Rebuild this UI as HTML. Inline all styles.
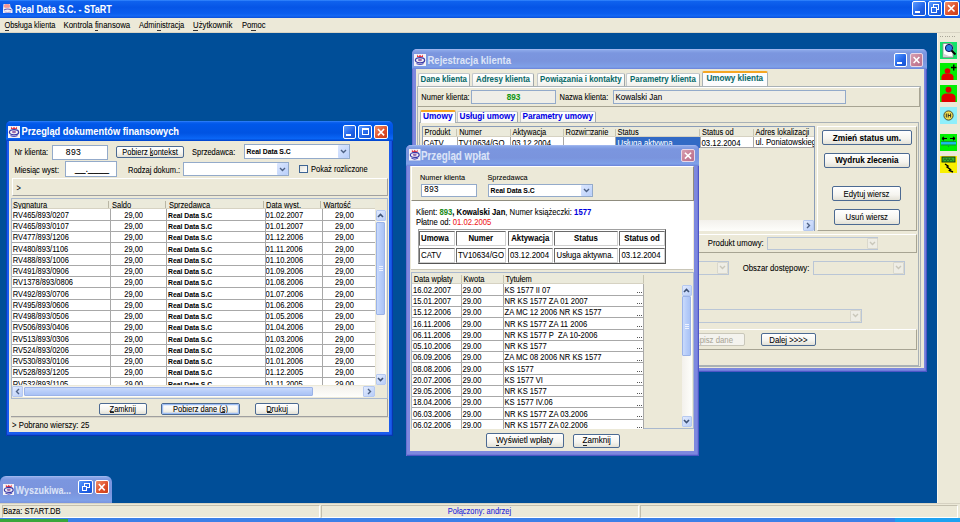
<!DOCTYPE html><html><head><meta charset="utf-8"><style>*{box-sizing:border-box;margin:0;padding:0}
html,body{width:960px;height:522px;overflow:hidden;background:#004E98;font-family:"Liberation Sans",sans-serif;font-size:7.5px;color:#000}
.a{position:absolute}
.t{position:absolute;white-space:nowrap;line-height:1;-webkit-text-stroke:0.06px currentColor;transform:scaleY(1.1)}
.face{background:#ECE9D8}
.atb{background:linear-gradient(#3D8DFF 0,#1064F0 1px,#0058EA 3px,#0053E2 60%,#0A66F6 88%,#0040C8 100%)}
.itb{background:linear-gradient(#A9BDF1 0,#8AA6E8 1.5px,#7B96DF 4px,#7A94DD 60%,#7FA0E8 90%,#6A82D8 100%)}
.xbtn{position:absolute;border:1px solid #fff;border-radius:2px;background:linear-gradient(135deg,#5A9BFF,#1F61E6 60%,#1B55D0)}
.xcl{position:absolute;border:1px solid #fff;border-radius:2px;background:linear-gradient(135deg,#F0906A,#E0522C 55%,#C83C18)}
.xcli{position:absolute;border:1px solid #E8D8E8;border-radius:2px;background:linear-gradient(135deg,#D8A0B0,#C47C94 60%,#B87090)}
.btn{position:absolute;border:1px solid #4C6A92;border-radius:2px;background:linear-gradient(#FFFFFF,#F5F4EF 60%,#E3E1D6)}
</style></head><body>
<div class="a" style="left:0px;top:0px;width:960.00px;height:18.00px;background:linear-gradient(#3A8CFF 0,#0F62EE 1.5px,#0655E6 40%,#0A5DEE 75%,#1468F4 88%,#0A4ED8 100%)"></div>
<svg class="a" style="left:1.5px;top:3px" width="11" height="11" viewBox="0 0 11 11"><path d="M1.5 1 H8 L8.5 4 L10.5 6.5 V10 H1 V6 Z" fill="#F4F0F4"/><path d="M2.5 1.5 H7.5 V4.5 H2.5Z" fill="#F05050"/><path d="M4 2 V4.2 M6 2 V4.2" stroke="#fff" stroke-width="0.8"/><path d="M2 7 Q5.5 5 9.5 7" stroke="#6A5AB8" stroke-width="1.1" fill="none"/><path d="M2.5 9 Q5.5 10 9 9" stroke="#9A8AD0" stroke-width="0.8" fill="none"/></svg>
<div class="t" style="left:15px;top:4.79px;font-size:9px;color:#fff;font-weight:bold;transform:scaleY(1.22)">Real Data S.C. - STaRT</div>
<div class="xbtn" style="left:911.7px;top:1px;width:13.90px;height:14.60px"></div>
<div class="a" style="left:915.2px;top:10.6px;width:4.50px;height:2.00px;background:#fff"></div>
<div class="xbtn" style="left:927.7px;top:1px;width:14.60px;height:14.60px"></div>
<div class="a" style="left:933.2px;top:4px;width:6.10px;height:5.60px;border:1px solid #fff;border-top-width:1.5px"></div>
<div class="a" style="left:931.2px;top:6.5px;width:5.60px;height:6.10px;border:1px solid #fff;border-top-width:1.5px;background:#2A6AEA"></div>
<div class="xcl" style="left:944.4px;top:1px;width:14.60px;height:14.60px"></div>
<svg class="a" style="left:944.4px;top:1px" width="14.600000000000023" height="14.6"><path d="M4.088000000000007 4.088 L10.512000000000016 10.511999999999999 M10.512000000000016 4.088 L4.088000000000007 10.511999999999999" stroke="#fff" stroke-width="1.6"/></svg>
<div class="a" style="left:0px;top:18px;width:960.00px;height:13.50px;background:#ECE9D8"></div>
<div class="a" style="left:0px;top:31.5px;width:960.00px;height:1.50px;background:#D8D4C4"></div>
<div class="t" style="left:4.5px;top:21.97px;font-size:7.4px">Obsługa klienta</div>
<div class="t" style="left:63.5px;top:21.75px;font-size:7.85px">Kontrola finansowa</div>
<div class="t" style="left:139px;top:21.90px;font-size:7.55px">Administracja</div>
<div class="t" style="left:193px;top:21.78px;font-size:7.8px">Użytkownik</div>
<div class="t" style="left:242px;top:21.88px;font-size:7.6px">Pomoc</div>
<div class="a" style="left:4.5px;top:29.6px;width:4.50px;height:0.80px;background:#333"></div>
<div class="a" style="left:95px;top:29.6px;width:2.50px;height:0.80px;background:#333"></div>
<div class="a" style="left:157px;top:29.6px;width:3.50px;height:0.80px;background:#333"></div>
<div class="a" style="left:193px;top:29.6px;width:5.00px;height:0.80px;background:#333"></div>
<div class="a" style="left:251px;top:29.6px;width:4.50px;height:0.80px;background:#333"></div>
<div class="a" style="left:937px;top:33px;width:23.00px;height:470.00px;background:#ECE9D8"></div>
<div class="a" style="left:940.0px;top:35.5px;width:1.00px;height:1.00px;background:#A8A597"></div>
<div class="a" style="left:942.3px;top:35.5px;width:1.00px;height:1.00px;background:#A8A597"></div>
<div class="a" style="left:944.6px;top:35.5px;width:1.00px;height:1.00px;background:#A8A597"></div>
<div class="a" style="left:946.9px;top:35.5px;width:1.00px;height:1.00px;background:#A8A597"></div>
<div class="a" style="left:949.2px;top:35.5px;width:1.00px;height:1.00px;background:#A8A597"></div>
<div class="a" style="left:951.5px;top:35.5px;width:1.00px;height:1.00px;background:#A8A597"></div>
<div class="a" style="left:953.8px;top:35.5px;width:1.00px;height:1.00px;background:#A8A597"></div>
<div class="a" style="left:0px;top:503px;width:960.00px;height:15.00px;background:#ECE9D8"></div>
<div class="a" style="left:0px;top:503px;width:960.00px;height:1.00px;background:#D6D2C2"></div>
<div class="a" style="left:2px;top:505px;width:317.50px;height:12.50px;border-top:1px solid #C3BFAE;border-left:1px solid #C3BFAE;border-bottom:1px solid #fff;border-right:1px solid #fff"></div>
<div class="a" style="left:320.5px;top:505px;width:318.00px;height:12.50px;border-top:1px solid #C3BFAE;border-left:1px solid #C3BFAE;border-bottom:1px solid #fff;border-right:1px solid #fff"></div>
<div class="a" style="left:639.5px;top:505px;width:318.00px;height:12.50px;border-top:1px solid #C3BFAE;border-left:1px solid #C3BFAE;border-bottom:1px solid #fff;border-right:1px solid #fff"></div>
<div class="t" style="left:3px;top:508.08px;font-size:7.6px">Baza: START.DB</div>
<div class="t" style="left:320.5px;width:318.0px;text-align:center;top:508.12px;color:#1F1FD8">Połączony: andrzej</div>
<div class="a" style="left:0px;top:518px;width:960.00px;height:4.00px;background:#3C80E8"></div>
<div class="a" style="left:0px;top:519px;width:67.50px;height:3.00px;background:#3AA63A"></div>
<div class="a" style="left:895px;top:518px;width:65.00px;height:4.00px;background:#1EA2F0"></div>
<div class="a" style="left:6px;top:120.5px;width:386.50px;height:315.30px;background:#1A5CEE;border-radius:5px 5px 0 0;box-shadow:inset 1px 0 0 #0A3CC0,inset -1.2px 0 0 #0836B0,inset 0 -1.2px 0 #0836B0"></div>
<div class="a" style="left:6px;top:120.5px;width:386.50px;height:20.50px;border-radius:5px 5px 0 0;background:linear-gradient(#3D8DFF 0,#1064F0 1px,#0058EA 3px,#0053E2 60%,#0A66F6 88%,#0040C8 100%)"></div>
<svg class="a" style="left:8px;top:126px" width="12" height="12" viewBox="0 0 12 12"><rect width="12" height="12" fill="#F4F2F6"/><path d="M3 0.5 L4.5 2.5 L6 0.8 L7.5 2.5 L9 0.5 L9 3 L3 3Z" fill="#E8303A"/><ellipse cx="6" cy="6.2" rx="4.6" ry="2.6" fill="none" stroke="#3A3AA8" stroke-width="1.3"/><ellipse cx="6" cy="6" rx="2" ry="1.3" fill="#9A6AB0"/><path d="M2.5 9.5 Q6 11.5 9.5 9.5" stroke="#5050B8" stroke-width="1.2" fill="none"/></svg>
<div class="t" style="left:21.5px;top:127.04px;font-size:9.3px;color:#fff;font-weight:bold;transform:scaleY(1.22)">Przegląd dokumentów finansowych</div>
<div class="xbtn" style="left:342.5px;top:124.6px;width:13.90px;height:14.40px"></div>
<div class="a" style="left:346.0px;top:134px;width:4.50px;height:2.00px;background:#fff"></div>
<div class="xbtn" style="left:358.4px;top:124.6px;width:14.10px;height:14.40px"></div>
<div class="a" style="left:361.9px;top:128.1px;width:7.10px;height:7.40px;border:1px solid #fff;border-top-width:2px"></div>
<div class="xcl" style="left:374.4px;top:124.6px;width:14.00px;height:14.40px"></div>
<svg class="a" style="left:374.4px;top:124.6px" width="14.0" height="14.400000000000006"><path d="M3.9200000000000004 4.032000000000002 L10.08 10.368000000000004 M10.08 4.032000000000002 L3.9200000000000004 10.368000000000004" stroke="#fff" stroke-width="1.6"/></svg>
<div class="a" style="left:9.2px;top:141px;width:379.50px;height:291.00px;background:#ECE9D8"></div>
<div class="t" style="left:14.4px;top:149.32px">Nr klienta:</div>
<div class="a" style="left:52px;top:145px;width:56.00px;height:15.00px;background:#fff;border:1px solid #93AACA"></div>
<div class="t" style="left:65.8px;top:148.09px;font-size:8.6px;letter-spacing:0.3px">893</div>
<div class="btn" style="left:116px;top:146px;width:68.00px;height:12.00px"></div>
<div class="t" style="left:116px;width:68px;text-align:center;top:149.12px">Pobierz kontekst</div>
<div class="t" style="left:192px;top:149.12px">Sprzedawca:</div>
<div class="a" style="left:244px;top:144.4px;width:105.60px;height:14.20px;background:#fff;border:1px solid #93AACA"></div>
<div class="a" style="left:337.6px;top:145.4px;width:11.00px;height:12.20px;border-radius:1px;background:linear-gradient(135deg,#DCE7FE,#B9CFFA)"></div>
<svg class="a" style="left:339.6px;top:149.0px" width="7" height="5"><path d="M1 1 L3.5 3.5 L6 1" stroke="#4D6185" stroke-width="1.4" fill="none"/></svg>
<div class="t" style="left:246.5px;top:149.47px;font-size:6.8px;font-weight:bold">Real Data S.C</div>
<div class="t" style="left:14.4px;top:166.52px">Miesiąc wyst:</div>
<div class="a" style="left:65px;top:161px;width:52.00px;height:15.50px;background:#fff;border:1px solid #93AACA"></div>
<div class="t" style="left:75px;top:164.19px;font-size:9.4px">__.____</div>
<div class="t" style="left:128px;top:166.52px">Rodzaj dokum.:</div>
<div class="a" style="left:183.3px;top:162px;width:105.50px;height:14.00px;background:#fff;border:1px solid #93AACA"></div>
<div class="a" style="left:276.8px;top:163px;width:11.00px;height:12.00px;border-radius:1px;background:linear-gradient(135deg,#DCE7FE,#B9CFFA)"></div>
<svg class="a" style="left:278.8px;top:166.5px" width="7" height="5"><path d="M1 1 L3.5 3.5 L6 1" stroke="#4D6185" stroke-width="1.4" fill="none"/></svg>
<div class="a" style="left:299.3px;top:164.7px;width:8.70px;height:8.80px;background:linear-gradient(135deg,#E4E3DC,#FFFFFF);border:1px solid #3E6594"></div>
<div class="t" style="left:311px;top:166.12px">Pokaż rozliczone</div>
<div class="a" style="left:11.5px;top:178px;width:376.00px;height:17.50px;border-top:1px solid #fff;border-left:1px solid #fff;border-right:1px solid #A0A0A0;border-bottom:1px solid #A0A0A0"></div>
<div class="t" style="left:16.4px;top:184.92px">&gt;</div>
<div class="a" style="left:11px;top:198px;width:376.50px;height:200.70px;border:1px solid #A9B8CE;background:#ECE9D8"></div>
<div class="a" style="left:12px;top:200px;width:363.00px;height:9.20px;background:#EBEADB;border-bottom:1px solid #D6D2C2"></div>
<div class="a" style="left:107.5px;top:201px;width:1.00px;height:7.00px;background:#B9B6A4"></div>
<div class="a" style="left:165px;top:201px;width:1.00px;height:7.00px;background:#B9B6A4"></div>
<div class="a" style="left:263px;top:201px;width:1.00px;height:7.00px;background:#B9B6A4"></div>
<div class="a" style="left:320px;top:201px;width:1.00px;height:7.00px;background:#B9B6A4"></div>
<div class="t" style="left:13px;top:201.62px">Sygnatura</div>
<div class="t" style="left:112px;top:201.62px">Saldo</div>
<div class="t" style="left:168.9px;top:201.62px">Sprzedawca</div>
<div class="t" style="left:266px;top:201.62px">Data wyst.</div>
<div class="t" style="left:323.5px;top:201.62px">Wartość</div>
<div class="a" style="left:12px;top:209.2px;width:363px;height:176.1px;overflow:hidden;background:#fff">
<div class="a" style="left:0px;top:10.75px;width:363.00px;height:0.75px;background:#A8A8A8"></div>
<div class="t" style="left:0.7px;top:2.62px">RV465/893/0207</div>
<div class="t" style="right:232px;top:2.62px">29,00</div>
<div class="t" style="left:156px;top:3.57px;font-size:6.8px;font-weight:bold">Real Data S.C</div>
<div class="t" style="left:253.6px;top:2.62px">01.02.2007</div>
<div class="t" style="right:21.200000000000045px;top:2.62px">29,00</div>
<div class="a" style="left:0px;top:22.0px;width:363.00px;height:0.75px;background:#A8A8A8"></div>
<div class="t" style="left:0.7px;top:13.88px">RV465/893/0107</div>
<div class="t" style="right:232px;top:13.88px">29,00</div>
<div class="t" style="left:156px;top:14.82px;font-size:6.8px;font-weight:bold">Real Data S.C</div>
<div class="t" style="left:253.6px;top:13.88px">01.01.2007</div>
<div class="t" style="right:21.200000000000045px;top:13.88px">29,00</div>
<div class="a" style="left:0px;top:33.25px;width:363.00px;height:0.75px;background:#A8A8A8"></div>
<div class="t" style="left:0.7px;top:25.12px">RV477/893/1206</div>
<div class="t" style="right:232px;top:25.12px">29,00</div>
<div class="t" style="left:156px;top:26.07px;font-size:6.8px;font-weight:bold">Real Data S.C</div>
<div class="t" style="left:253.6px;top:25.12px">01.12.2006</div>
<div class="t" style="right:21.200000000000045px;top:25.12px">29,00</div>
<div class="a" style="left:0px;top:44.5px;width:363.00px;height:0.75px;background:#A8A8A8"></div>
<div class="t" style="left:0.7px;top:36.38px">RV480/893/1106</div>
<div class="t" style="right:232px;top:36.38px">29,00</div>
<div class="t" style="left:156px;top:37.32px;font-size:6.8px;font-weight:bold">Real Data S.C</div>
<div class="t" style="left:253.6px;top:36.38px">01.11.2006</div>
<div class="t" style="right:21.200000000000045px;top:36.38px">29,00</div>
<div class="a" style="left:0px;top:55.75px;width:363.00px;height:0.75px;background:#A8A8A8"></div>
<div class="t" style="left:0.7px;top:47.62px">RV488/893/1006</div>
<div class="t" style="right:232px;top:47.62px">29,00</div>
<div class="t" style="left:156px;top:48.57px;font-size:6.8px;font-weight:bold">Real Data S.C</div>
<div class="t" style="left:253.6px;top:47.62px">01.10.2006</div>
<div class="t" style="right:21.200000000000045px;top:47.62px">29,00</div>
<div class="a" style="left:0px;top:67.0px;width:363.00px;height:0.75px;background:#A8A8A8"></div>
<div class="t" style="left:0.7px;top:58.88px">RV491/893/0906</div>
<div class="t" style="right:232px;top:58.88px">29,00</div>
<div class="t" style="left:156px;top:59.82px;font-size:6.8px;font-weight:bold">Real Data S.C</div>
<div class="t" style="left:253.6px;top:58.88px">01.09.2006</div>
<div class="t" style="right:21.200000000000045px;top:58.88px">29,00</div>
<div class="a" style="left:0px;top:78.25px;width:363.00px;height:0.75px;background:#A8A8A8"></div>
<div class="t" style="left:0.7px;top:70.12px">RV1378/893/0806</div>
<div class="t" style="right:232px;top:70.12px">29,00</div>
<div class="t" style="left:156px;top:71.07px;font-size:6.8px;font-weight:bold">Real Data S.C</div>
<div class="t" style="left:253.6px;top:70.12px">01.08.2006</div>
<div class="t" style="right:21.200000000000045px;top:70.12px">29,00</div>
<div class="a" style="left:0px;top:89.5px;width:363.00px;height:0.75px;background:#A8A8A8"></div>
<div class="t" style="left:0.7px;top:81.38px">RV492/893/0706</div>
<div class="t" style="right:232px;top:81.38px">29,00</div>
<div class="t" style="left:156px;top:82.32px;font-size:6.8px;font-weight:bold">Real Data S.C</div>
<div class="t" style="left:253.6px;top:81.38px">01.07.2006</div>
<div class="t" style="right:21.200000000000045px;top:81.38px">29,00</div>
<div class="a" style="left:0px;top:100.75px;width:363.00px;height:0.75px;background:#A8A8A8"></div>
<div class="t" style="left:0.7px;top:92.62px">RV495/893/0606</div>
<div class="t" style="right:232px;top:92.62px">29,00</div>
<div class="t" style="left:156px;top:93.57px;font-size:6.8px;font-weight:bold">Real Data S.C</div>
<div class="t" style="left:253.6px;top:92.62px">01.06.2006</div>
<div class="t" style="right:21.200000000000045px;top:92.62px">29,00</div>
<div class="a" style="left:0px;top:112.0px;width:363.00px;height:0.75px;background:#A8A8A8"></div>
<div class="t" style="left:0.7px;top:103.88px">RV498/893/0506</div>
<div class="t" style="right:232px;top:103.88px">29,00</div>
<div class="t" style="left:156px;top:104.82px;font-size:6.8px;font-weight:bold">Real Data S.C</div>
<div class="t" style="left:253.6px;top:103.88px">01.05.2006</div>
<div class="t" style="right:21.200000000000045px;top:103.88px">29,00</div>
<div class="a" style="left:0px;top:123.25px;width:363.00px;height:0.75px;background:#A8A8A8"></div>
<div class="t" style="left:0.7px;top:115.12px">RV506/893/0406</div>
<div class="t" style="right:232px;top:115.12px">29,00</div>
<div class="t" style="left:156px;top:116.07px;font-size:6.8px;font-weight:bold">Real Data S.C</div>
<div class="t" style="left:253.6px;top:115.12px">01.04.2006</div>
<div class="t" style="right:21.200000000000045px;top:115.12px">29,00</div>
<div class="a" style="left:0px;top:134.5px;width:363.00px;height:0.75px;background:#A8A8A8"></div>
<div class="t" style="left:0.7px;top:126.38px">RV513/893/0306</div>
<div class="t" style="right:232px;top:126.38px">29,00</div>
<div class="t" style="left:156px;top:127.32px;font-size:6.8px;font-weight:bold">Real Data S.C</div>
<div class="t" style="left:253.6px;top:126.38px">01.03.2006</div>
<div class="t" style="right:21.200000000000045px;top:126.38px">29,00</div>
<div class="a" style="left:0px;top:145.75px;width:363.00px;height:0.75px;background:#A8A8A8"></div>
<div class="t" style="left:0.7px;top:137.62px">RV524/893/0206</div>
<div class="t" style="right:232px;top:137.62px">29,00</div>
<div class="t" style="left:156px;top:138.57px;font-size:6.8px;font-weight:bold">Real Data S.C</div>
<div class="t" style="left:253.6px;top:137.62px">01.02.2006</div>
<div class="t" style="right:21.200000000000045px;top:137.62px">29,00</div>
<div class="a" style="left:0px;top:157.0px;width:363.00px;height:0.75px;background:#A8A8A8"></div>
<div class="t" style="left:0.7px;top:148.88px">RV530/893/0106</div>
<div class="t" style="right:232px;top:148.88px">29,00</div>
<div class="t" style="left:156px;top:149.82px;font-size:6.8px;font-weight:bold">Real Data S.C</div>
<div class="t" style="left:253.6px;top:148.88px">01.01.2006</div>
<div class="t" style="right:21.200000000000045px;top:148.88px">29,00</div>
<div class="a" style="left:0px;top:168.25px;width:363.00px;height:0.75px;background:#A8A8A8"></div>
<div class="t" style="left:0.7px;top:160.12px">RV528/893/1205</div>
<div class="t" style="right:232px;top:160.12px">29,00</div>
<div class="t" style="left:156px;top:161.07px;font-size:6.8px;font-weight:bold">Real Data S.C</div>
<div class="t" style="left:253.6px;top:160.12px">01.12.2005</div>
<div class="t" style="right:21.200000000000045px;top:160.12px">29,00</div>
<div class="a" style="left:0px;top:179.5px;width:363.00px;height:0.75px;background:#A8A8A8"></div>
<div class="t" style="left:0.7px;top:171.38px">RV532/893/1105</div>
<div class="t" style="right:232px;top:171.38px">29,00</div>
<div class="t" style="left:156px;top:172.32px;font-size:6.8px;font-weight:bold">Real Data S.C</div>
<div class="t" style="left:253.6px;top:171.38px">01.11.2005</div>
<div class="t" style="right:21.200000000000045px;top:171.38px">29,00</div>
<div class="a" style="left:97.9px;top:0px;width:0.75px;height:176.10px;background:#A8A8A8"></div>
<div class="a" style="left:153.9px;top:0px;width:0.75px;height:176.10px;background:#A8A8A8"></div>
<div class="a" style="left:252.7px;top:0px;width:0.75px;height:176.10px;background:#A8A8A8"></div>
<div class="a" style="left:309.5px;top:0px;width:0.75px;height:176.10px;background:#A8A8A8"></div>
</div>
<div class="a" style="left:375.5px;top:209.8px;width:10.20px;height:175.50px;background:linear-gradient(90deg,#F3F1EC,#FEFEFB)"></div>
<div class="a" style="left:375.5px;top:209.8px;width:10.20px;height:11.20px;border-radius:1px;background:linear-gradient(135deg,#E2EBFE,#B8CDF8);border:0.5px solid #B6C9F0"></div>
<svg class="a" style="left:377.1px;top:212.9px" width="7" height="5"><path d="M1 4 L3.5 1.5 L6 4" stroke="#3D5175" stroke-width="1.6" fill="none"/></svg>
<div class="a" style="left:375.5px;top:374.1px;width:10.20px;height:11.20px;border-radius:1px;background:linear-gradient(135deg,#E2EBFE,#B8CDF8);border:0.5px solid #B6C9F0"></div>
<svg class="a" style="left:377.1px;top:377.20000000000005px" width="7" height="5"><path d="M1 1 L3.5 3.5 L6 1" stroke="#3D5175" stroke-width="1.6" fill="none"/></svg>
<div class="a" style="left:376.0px;top:221.5px;width:9.20px;height:93.50px;border-radius:1px;background:linear-gradient(90deg,#C9DAFC,#B7CDF9 50%,#A9C2F5);border:0.5px solid #9BB3E8"></div>
<div class="a" style="left:378.5px;top:265.75px;width:4.20px;height:1.00px;background:#EEF3FE"></div>
<div class="a" style="left:378.5px;top:267.75px;width:4.20px;height:1.00px;background:#EEF3FE"></div>
<div class="a" style="left:378.5px;top:269.75px;width:4.20px;height:1.00px;background:#EEF3FE"></div>
<div class="a" style="left:11.5px;top:386.3px;width:363.50px;height:10.70px;background:linear-gradient(#F3F1EC,#FEFEFB)"></div>
<div class="a" style="left:11.5px;top:386.3px;width:11.70px;height:10.70px;border-radius:1px;background:linear-gradient(135deg,#E2EBFE,#B8CDF8);border:0.5px solid #B6C9F0"></div>
<svg class="a" style="left:14.849999999999994px;top:388.15px" width="5" height="7"><path d="M4 1 L1.5 3.5 L4 6" stroke="#4D6185" stroke-width="1.4" fill="none"/></svg>
<div class="a" style="left:363.3px;top:386.3px;width:11.70px;height:10.70px;border-radius:1px;background:linear-gradient(135deg,#E2EBFE,#B8CDF8);border:0.5px solid #B6C9F0"></div>
<svg class="a" style="left:366.65px;top:388.15px" width="5" height="7"><path d="M1 1 L3.5 3.5 L1 6" stroke="#4D6185" stroke-width="1.4" fill="none"/></svg>
<div class="a" style="left:24.4px;top:386.8px;width:288.60px;height:9.70px;border-radius:1px;background:linear-gradient(#C9DAFC,#B7CDF9 50%,#A9C2F5);border:0.5px solid #9BB3E8"></div>
<div class="btn" style="left:98.7px;top:402.5px;width:48.00px;height:12.20px"></div>
<div class="t" style="left:98.7px;width:47.999999999999986px;text-align:center;top:405.73px">Zamknij</div>
<div class="btn" style="left:161px;top:402.5px;width:79.00px;height:12.20px"></div>
<div class="t" style="left:161px;width:79px;text-align:center;top:405.73px">Pobierz dane (s)</div>
<div class="a" style="left:162px;top:403.5px;width:77.00px;height:10.20px;border-radius:1px;box-shadow:inset 0 0 0 1.2px #9DBDF3"></div>
<div class="btn" style="left:255.3px;top:402.5px;width:43.40px;height:12.20px"></div>
<div class="t" style="left:255.3px;width:43.39999999999998px;text-align:center;top:405.73px">Drukuj</div>
<div class="a" style="left:11px;top:399px;width:376.50px;height:17.70px;border-bottom:1px solid #A0A0A0;border-right:1px solid #A0A0A0"></div>
<div class="a" style="left:11px;top:417px;width:377.70px;height:1.00px;background:#D9D5C6"></div>
<div class="t" style="left:12px;top:421.58px;font-size:7.8px">&gt; Pobrano wierszy: 25</div>
<div class="a" style="left:109.5px;top:412.2px;width:4.50px;height:0.80px;background:#222"></div>
<div class="a" style="left:221px;top:412.2px;width:3.50px;height:0.80px;background:#222"></div>
<div class="a" style="left:267px;top:412.2px;width:5.00px;height:0.80px;background:#222"></div>
<div class="a" style="left:149.6px;top:155.3px;width:3.40px;height:0.80px;background:#222"></div>
<div class="a" style="left:412px;top:49px;width:515.00px;height:323.00px;background:#7D88DF;border-radius:5px 5px 0 0;box-shadow:inset 1px 0 0 #6A70D0,inset -1.2px 0 0 #4D55C6,inset 0 -1.2px 0 #4D55C6"></div>
<div class="a" style="left:412px;top:49px;width:515.00px;height:20.00px;border-radius:5px 5px 0 0;background:linear-gradient(#A9BDF1 0,#8AA6E8 1.5px,#7B96DF 4px,#7A94DD 60%,#7FA0E8 90%,#6A82D8 100%)"></div>
<svg class="a" style="left:414px;top:54px" width="12" height="12" viewBox="0 0 12 12"><rect width="12" height="12" fill="#F4F2F6"/><path d="M3 0.5 L4.5 2.5 L6 0.8 L7.5 2.5 L9 0.5 L9 3 L3 3Z" fill="#E8303A"/><ellipse cx="6" cy="6.2" rx="4.6" ry="2.6" fill="none" stroke="#3A3AA8" stroke-width="1.3"/><ellipse cx="6" cy="6" rx="2" ry="1.3" fill="#9A6AB0"/><path d="M2.5 9.5 Q6 11.5 9.5 9.5" stroke="#5050B8" stroke-width="1.2" fill="none"/></svg>
<div class="t" style="left:427.5px;top:55.45px;font-size:9.5px;color:#DCE4F8;font-weight:bold;transform:scaleY(1.22)">Rejestracja klienta</div>
<div class="xbtn" style="left:893.5px;top:53.4px;width:13.50px;height:14.00px"></div>
<div class="a" style="left:897.0px;top:62.400000000000006px;width:4.50px;height:2.00px;background:#fff"></div>
<div class="xcli" style="left:910px;top:53.4px;width:13.00px;height:14.00px"></div>
<svg class="a" style="left:910px;top:53.4px" width="13" height="14.000000000000007"><path d="M3.6400000000000006 3.920000000000002 L9.36 10.080000000000005 M9.36 3.920000000000002 L3.6400000000000006 10.080000000000005" stroke="#fff" stroke-width="1.6"/></svg>
<div class="a" style="left:416px;top:69px;width:507.50px;height:298.50px;background:#ECE9D8"></div>
<div class="a" style="left:417.5px;top:72.5px;width:52.50px;height:13.50px;border:1px solid #C3C8CC;border-right-color:#A0A6AA;border-bottom:none;border-radius:2px 2px 0 0;background:linear-gradient(#FFFFFF,#FAFAF7 60%,#F0EFEA)"></div>
<div class="t" style="left:417.5px;width:52.5px;text-align:center;top:76.33px;font-size:7.9px;color:#0B6B6B;font-weight:bold">Dane klienta</div>
<div class="a" style="left:472px;top:72.5px;width:62.00px;height:13.50px;border:1px solid #C3C8CC;border-right-color:#A0A6AA;border-bottom:none;border-radius:2px 2px 0 0;background:linear-gradient(#FFFFFF,#FAFAF7 60%,#F0EFEA)"></div>
<div class="t" style="left:472px;width:62px;text-align:center;top:76.33px;font-size:7.9px;color:#0B6B6B;font-weight:bold">Adresy klienta</div>
<div class="a" style="left:536.7px;top:72.5px;width:88.30px;height:13.50px;border:1px solid #C3C8CC;border-right-color:#A0A6AA;border-bottom:none;border-radius:2px 2px 0 0;background:linear-gradient(#FFFFFF,#FAFAF7 60%,#F0EFEA)"></div>
<div class="t" style="left:536.7px;width:88.29999999999995px;text-align:center;top:76.33px;font-size:7.9px;color:#0B6B6B;font-weight:bold">Powiązania i kontakty</div>
<div class="a" style="left:626px;top:72.5px;width:74.00px;height:13.50px;border:1px solid #C3C8CC;border-right-color:#A0A6AA;border-bottom:none;border-radius:2px 2px 0 0;background:linear-gradient(#FFFFFF,#FAFAF7 60%,#F0EFEA)"></div>
<div class="t" style="left:626px;width:74px;text-align:center;top:76.33px;font-size:7.9px;color:#0B6B6B;font-weight:bold">Parametry klienta</div>
<div class="a" style="left:416.5px;top:85.5px;width:504.50px;height:281.50px;border:1px solid #A9B1B6;background:#F5F4EC"></div>
<div class="a" style="left:702px;top:70.5px;width:65.50px;height:15.50px;border:1px solid #A9B1B6;border-bottom:none;border-top:2px solid #F5A623;border-radius:2px 2px 0 0;background:#FCFCFE"></div>
<div class="t" style="left:702px;width:65.5px;text-align:center;top:75.33px;font-size:8.1px;color:#0B6B6B;font-weight:bold">Umowy klienta</div>
<div class="a" style="left:417.5px;top:87px;width:502.50px;height:19.50px;background:#ECE9D8;border-bottom:1.5px solid #A7A493;border-right:1.5px solid #A7A493;border-top:1px solid #fff"></div>
<div class="t" style="left:421.3px;top:94.33px">Numer klienta:</div>
<div class="a" style="left:471px;top:90px;width:85.00px;height:14.00px;background:#EFEEE8;border:1px solid #93AACA"></div>
<div class="t" style="left:471px;width:85px;text-align:center;top:93.78px;font-size:8.2px;color:#129612;font-weight:bold">893</div>
<div class="t" style="left:559.5px;top:94.33px">Nazwa klienta:</div>
<div class="a" style="left:612.5px;top:90px;width:233.00px;height:13.75px;background:#EFEEE8;border:1px solid #93AACA"></div>
<div class="t" style="left:615.5px;top:93.68px;font-size:8px">Kowalski Jan</div>
<div class="a" style="left:417.5px;top:106.5px;width:502.50px;height:259.50px;background:#ECE9D8"></div>
<div class="a" style="left:457px;top:111px;width:60.50px;height:11.50px;border:1px solid #C3C8CC;border-right-color:#A0A6AA;border-bottom:none;border-radius:2px 2px 0 0;background:linear-gradient(#FFFFFF,#FAFAF7 60%,#F0EFEA)"></div>
<div class="t" style="left:457px;width:60.5px;text-align:center;top:112.98px;font-size:8.2px;color:#0000E6;font-weight:bold">Usługi umowy</div>
<div class="a" style="left:519.5px;top:111px;width:76.50px;height:11.50px;border:1px solid #C3C8CC;border-right-color:#A0A6AA;border-bottom:none;border-radius:2px 2px 0 0;background:linear-gradient(#FFFFFF,#FAFAF7 60%,#F0EFEA)"></div>
<div class="t" style="left:519.5px;width:76.5px;text-align:center;top:112.98px;font-size:8.2px;color:#0000E6;font-weight:bold">Parametry umowy</div>
<div class="a" style="left:418.5px;top:122px;width:500.50px;height:244.00px;border:1px solid #A9B1B6;background:#F2F1EA"></div>
<div class="a" style="left:419.5px;top:109.5px;width:36.50px;height:13.00px;border:1px solid #A9B1B6;border-bottom:none;border-top:2px solid #F5A623;border-radius:2px 2px 0 0;background:#FCFCFE"></div>
<div class="t" style="left:419.5px;width:36.5px;text-align:center;top:111.93px;font-size:8.3px;color:#0000E6;font-weight:bold">Umowy</div>
<div class="a" style="left:419.5px;top:123px;width:498.50px;height:242.00px;background:#ECE9D8"></div>
<div class="a" style="left:421.5px;top:125.5px;width:393.50px;height:105.90px;border:1px solid #8A9DB8;background:#ECE9D8"></div>
<div class="a" style="left:422.5px;top:127.5px;width:391.50px;height:9.50px;background:#EBEADB;border-bottom:1px solid #D6D2C2"></div>
<div class="a" style="left:456.25px;top:128.5px;width:1.00px;height:7.50px;background:#C7C5B2"></div>
<div class="a" style="left:509.5px;top:128.5px;width:1.00px;height:7.50px;background:#C7C5B2"></div>
<div class="a" style="left:562.5px;top:128.5px;width:1.00px;height:7.50px;background:#C7C5B2"></div>
<div class="a" style="left:614.75px;top:128.5px;width:1.00px;height:7.50px;background:#C7C5B2"></div>
<div class="a" style="left:699.2px;top:128.5px;width:1.00px;height:7.50px;background:#C7C5B2"></div>
<div class="a" style="left:752.5px;top:128.5px;width:1.00px;height:7.50px;background:#C7C5B2"></div>
<div class="t" style="left:424.5px;top:128.62px">Produkt</div>
<div class="t" style="left:459.2px;top:128.62px">Numer</div>
<div class="t" style="left:512.5px;top:128.62px">Aktywacja</div>
<div class="t" style="left:565.5px;top:128.62px">Rozwi□zanie</div>
<div class="t" style="left:617.5px;top:128.62px">Status</div>
<div class="t" style="left:702px;top:128.62px">Status od</div>
<div class="t" style="left:755.5px;top:128.62px">Adres lokalizacji</div>
<div class="a" style="left:422.5px;top:137px;width:391.50px;height:11.30px;background:#fff;border-bottom:0.75px solid #A8A8A8"></div>
<div class="a" style="left:615.75px;top:137px;width:84.45px;height:11.30px;background:#316AC5"></div>
<div class="a" style="left:456.75px;top:137px;width:0.75px;height:11.30px;background:#A8A8A8"></div>
<div class="a" style="left:510.0px;top:137px;width:0.75px;height:11.30px;background:#A8A8A8"></div>
<div class="a" style="left:563.0px;top:137px;width:0.75px;height:11.30px;background:#A8A8A8"></div>
<div class="a" style="left:615.25px;top:137px;width:0.75px;height:11.30px;background:#A8A8A8"></div>
<div class="a" style="left:699.7px;top:137px;width:0.75px;height:11.30px;background:#A8A8A8"></div>
<div class="a" style="left:753.0px;top:137px;width:0.75px;height:11.30px;background:#A8A8A8"></div>
<div class="t" style="left:423.5px;top:139.58px;font-size:7.8px">CATV</div>
<div class="t" style="left:458.5px;top:139.58px;font-size:7.8px">TV10634/GO</div>
<div class="t" style="left:512px;top:139.58px;font-size:7.8px">03.12.2004</div>
<div class="t" style="left:617.5px;top:139.58px;font-size:7.8px;color:#fff">Usługa aktywna</div>
<div class="t" style="left:701.5px;top:139.58px;font-size:7.8px">03.12.2004</div>
<div class="a" style="left:754px;top:137px;width:60px;height:11px;overflow:hidden"><div class="t" style="left:1.5px;top:2.2px;font-size:7.8px">ul. Poniatowskiego</div></div>
<div class="a" style="left:422.5px;top:220px;width:391.50px;height:10.50px;background:linear-gradient(#F3F1EC,#FEFEFB)"></div>
<div class="a" style="left:422.5px;top:220px;width:11.50px;height:10.50px;border-radius:1px;background:linear-gradient(135deg,#E2EBFE,#B8CDF8);border:0.5px solid #B6C9F0"></div>
<svg class="a" style="left:425.75px;top:221.75px" width="5" height="7"><path d="M4 1 L1.5 3.5 L4 6" stroke="#4D6185" stroke-width="1.4" fill="none"/></svg>
<div class="a" style="left:802.5px;top:220px;width:11.50px;height:10.50px;border-radius:1px;background:linear-gradient(135deg,#E2EBFE,#B8CDF8);border:0.5px solid #B6C9F0"></div>
<svg class="a" style="left:805.75px;top:221.75px" width="5" height="7"><path d="M1 1 L3.5 3.5 L1 6" stroke="#4D6185" stroke-width="1.4" fill="none"/></svg>
<div class="a" style="left:817.3px;top:125.5px;width:99.70px;height:105.90px;border-top:1px solid #fff;border-left:1px solid #fff;border-right:1.5px solid #A7A493;border-bottom:1.5px solid #A7A493"></div>
<div class="btn" style="left:822px;top:130.3px;width:89.70px;height:14.50px"></div>
<div class="t" style="left:822px;width:89.70000000000005px;text-align:center;top:134.28px;font-size:8.3px;font-weight:bold">Zmień status um.</div>
<div class="btn" style="left:824px;top:153px;width:85.80px;height:14.80px"></div>
<div class="t" style="left:824px;width:85.79999999999995px;text-align:center;top:157.23px;font-size:8.1px;font-weight:bold">Wydruk zlecenia</div>
<div class="btn" style="left:832px;top:186.3px;width:69.00px;height:15.00px"></div>
<div class="t" style="left:832px;width:69px;text-align:center;top:190.78px;font-size:7.8px">Edytuj wiersz</div>
<div class="btn" style="left:834px;top:209.4px;width:65.60px;height:15.30px"></div>
<div class="t" style="left:834px;width:65.60000000000002px;text-align:center;top:214.03px;font-size:7.8px">Usuń wiersz</div>
<div class="a" style="left:600px;top:233.8px;width:317.00px;height:19.40px;border-top:1px solid #fff;border-left:1px solid #fff;border-right:1.5px solid #A7A493;border-bottom:1.5px solid #A7A493"></div>
<div class="t" style="left:707.8px;top:240.38px;font-size:7.8px">Produkt umowy:</div>
<div class="a" style="left:766.6px;top:236.9px;width:111.90px;height:13.10px;background:#ECE9D8;border:1px solid #BAC6D6"></div>
<div class="a" style="left:866.5px;top:237.9px;width:11.00px;height:11.10px;border-radius:1px;background:#EEEDE5;border:1px solid #DAD8CC"></div>
<svg class="a" style="left:868.5px;top:240.95px" width="7" height="5"><path d="M1 1 L3.5 3.5 L6 1" stroke="#C9C7BA" stroke-width="1.4" fill="none"/></svg>
<div class="a" style="left:600px;top:260.5px;width:128.90px;height:14.00px;background:#ECE9D8;border:1px solid #BAC6D6"></div>
<div class="a" style="left:716.9px;top:261.5px;width:11.00px;height:12.00px;border-radius:1px;background:#EEEDE5;border:1px solid #DAD8CC"></div>
<svg class="a" style="left:718.9px;top:265.0px" width="7" height="5"><path d="M1 1 L3.5 3.5 L6 1" stroke="#C9C7BA" stroke-width="1.4" fill="none"/></svg>
<div class="t" style="left:742.7px;top:264.68px;font-size:7.8px">Obszar dostępowy:</div>
<div class="a" style="left:813.2px;top:260.8px;width:91.40px;height:13.80px;background:#ECE9D8;border:1px solid #BAC6D6"></div>
<div class="a" style="left:892.6px;top:261.8px;width:11.00px;height:11.80px;border-radius:1px;background:#EEEDE5;border:1px solid #DAD8CC"></div>
<svg class="a" style="left:894.6px;top:265.20000000000005px" width="7" height="5"><path d="M1 1 L3.5 3.5 L6 1" stroke="#C9C7BA" stroke-width="1.4" fill="none"/></svg>
<div class="a" style="left:600px;top:308.5px;width:261.60px;height:14.90px;background:#ECE9D8;border:1px solid #BAC6D6"></div>
<div class="a" style="left:849.6px;top:309.5px;width:11.00px;height:12.90px;border-radius:1px;background:#EEEDE5;border:1px solid #DAD8CC"></div>
<svg class="a" style="left:851.6px;top:313.45px" width="7" height="5"><path d="M1 1 L3.5 3.5 L6 1" stroke="#C9C7BA" stroke-width="1.4" fill="none"/></svg>
<div class="a" style="left:600px;top:329px;width:317.00px;height:20.50px;border-top:1px solid #fff;border-left:1px solid #fff;border-right:1.5px solid #A7A493;border-bottom:1.5px solid #A7A493"></div>
<div class="btn" style="left:679px;top:332.8px;width:65.60px;height:13.50px;border-color:#C9C7BA;background:#F4F3EE"></div>
<div class="t" style="left:679px;width:65.60000000000002px;text-align:center;top:336.53px;font-size:7.8px;color:#ACA899">Zapisz dane</div>
<div class="btn" style="left:760.5px;top:332.8px;width:55.80px;height:13.50px"></div>
<div class="t" style="left:760.5px;width:55.799999999999955px;text-align:center;top:336.53px;font-size:7.8px">Dalej &gt;&gt;&gt;&gt;</div>
<div class="a" style="left:406px;top:144.5px;width:293.00px;height:311.50px;background:#7D88DF;border-radius:5px 5px 0 0;box-shadow:inset 1px 0 0 #6A70D0,inset -1.2px 0 0 #4D55C6,inset 0 -1.2px 0 #4D55C6"></div>
<div class="a" style="left:406px;top:144.5px;width:293.00px;height:21.00px;border-radius:5px 5px 0 0;background:linear-gradient(#A9BDF1 0,#8AA6E8 1.5px,#7B96DF 4px,#7A94DD 60%,#7FA0E8 90%,#6A82D8 100%)"></div>
<svg class="a" style="left:409px;top:149px" width="11.5" height="11.5" viewBox="0 0 12 12"><rect width="12" height="12" fill="#F4F2F6"/><path d="M3 0.5 L4.5 2.5 L6 0.8 L7.5 2.5 L9 0.5 L9 3 L3 3Z" fill="#E8303A"/><ellipse cx="6" cy="6.2" rx="4.6" ry="2.6" fill="none" stroke="#3A3AA8" stroke-width="1.3"/><ellipse cx="6" cy="6" rx="2" ry="1.3" fill="#9A6AB0"/><path d="M2.5 9.5 Q6 11.5 9.5 9.5" stroke="#5050B8" stroke-width="1.2" fill="none"/></svg>
<div class="t" style="left:421px;top:151.20px;font-size:9.8px;color:#DCE4F8;font-weight:bold;transform:scaleY(1.22)">Przegląd wpłat</div>
<div class="xcli" style="left:681px;top:148.5px;width:14.00px;height:13.30px"></div>
<svg class="a" style="left:681px;top:148.5px" width="14" height="13.300000000000011"><path d="M3.9200000000000004 3.7240000000000038 L10.08 9.576000000000008 M10.08 3.7240000000000038 L3.9200000000000004 9.576000000000008" stroke="#fff" stroke-width="1.6"/></svg>
<div class="a" style="left:410.2px;top:165.5px;width:284.30px;height:285.00px;background:#ECE9D8"></div>
<div class="a" style="left:411px;top:166px;width:282.50px;height:35.00px;border-top:1px solid #fff;border-left:1px solid #fff;border-right:1.5px solid #8F8C7E;border-bottom:1.5px solid #8F8C7E"></div>
<div class="t" style="left:420px;top:173.92px;font-size:7.3px">Numer klienta</div>
<div class="a" style="left:420.5px;top:184px;width:56.50px;height:13.00px;background:#fff;border:1px solid #93AACA"></div>
<div class="t" style="left:424.3px;top:186.28px;font-size:8px;letter-spacing:0.45px">893</div>
<div class="t" style="left:487.5px;top:173.92px;font-size:7.3px">Sprzedawca</div>
<div class="a" style="left:488px;top:184px;width:104.50px;height:13.00px;background:#fff;border:1px solid #93AACA"></div>
<div class="a" style="left:580.5px;top:185px;width:11.00px;height:11.00px;border-radius:1px;background:linear-gradient(135deg,#DCE7FE,#B9CFFA)"></div>
<svg class="a" style="left:582.5px;top:188.0px" width="7" height="5"><path d="M1 1 L3.5 3.5 L6 1" stroke="#4D6185" stroke-width="1.4" fill="none"/></svg>
<div class="t" style="left:490.5px;top:188.47px;font-size:6.8px;font-weight:bold">Real Data S.C</div>
<div class="a" style="left:411px;top:201px;width:281.50px;height:68.50px;background:#fff;border-bottom:1px solid #C9C6B8"></div>
<div class="t" style="left:416px;top:209.1px;font-size:7.7px">Klient: <b style="color:#1A8A1A">893</b><b>, Kowalski Jan</b>, Numer książeczki: <b style="color:#0000E0">1577</b></div>
<div class="t" style="left:416px;top:219.4px;font-size:7.7px">Płatne od: <span style="color:#F01818">01.02.2005</span></div>
<div class="a" style="left:417.5px;top:229.3px;width:248.20px;height:35.20px;border:1.5px solid #A0A0A0;border-right-color:#555;border-bottom-color:#555;background:#fff"></div>
<div class="a" style="left:418.5px;top:230.8px;width:36.00px;height:15.40px;border:1px solid #6A6A6A;border-right-color:#D0D0D0;border-bottom-color:#D0D0D0"></div>
<div class="a" style="left:418.5px;top:247.8px;width:36.00px;height:15.40px;border:1px solid #6A6A6A;border-right-color:#D0D0D0;border-bottom-color:#D0D0D0"></div>
<div class="t" style="left:421.0px;top:235.08px;font-size:7.8px;font-weight:bold">Umowa</div>
<div class="t" style="left:421.0px;top:251.78px;font-size:7.8px">CATV</div>
<div class="a" style="left:455.5px;top:230.8px;width:50.50px;height:15.40px;border:1px solid #6A6A6A;border-right-color:#D0D0D0;border-bottom-color:#D0D0D0"></div>
<div class="a" style="left:455.5px;top:247.8px;width:50.50px;height:15.40px;border:1px solid #6A6A6A;border-right-color:#D0D0D0;border-bottom-color:#D0D0D0"></div>
<div class="t" style="left:455.5px;width:50.5px;text-align:center;top:235.08px;font-size:7.8px;font-weight:bold">Numer</div>
<div class="t" style="left:458.0px;top:251.78px;font-size:7.8px">TV10634/GO</div>
<div class="a" style="left:507.5px;top:230.8px;width:45.50px;height:15.40px;border:1px solid #6A6A6A;border-right-color:#D0D0D0;border-bottom-color:#D0D0D0"></div>
<div class="a" style="left:507.5px;top:247.8px;width:45.50px;height:15.40px;border:1px solid #6A6A6A;border-right-color:#D0D0D0;border-bottom-color:#D0D0D0"></div>
<div class="t" style="left:507.5px;width:45.5px;text-align:center;top:235.08px;font-size:7.8px;font-weight:bold">Aktywacja</div>
<div class="t" style="left:510.0px;top:251.78px;font-size:7.8px">03.12.2004</div>
<div class="a" style="left:554px;top:230.8px;width:64.00px;height:15.40px;border:1px solid #6A6A6A;border-right-color:#D0D0D0;border-bottom-color:#D0D0D0"></div>
<div class="a" style="left:554px;top:247.8px;width:64.00px;height:15.40px;border:1px solid #6A6A6A;border-right-color:#D0D0D0;border-bottom-color:#D0D0D0"></div>
<div class="t" style="left:554px;width:64px;text-align:center;top:235.08px;font-size:7.8px;font-weight:bold">Status</div>
<div class="t" style="left:556.5px;top:251.78px;font-size:7.8px">Usługa aktywna.</div>
<div class="a" style="left:619px;top:230.8px;width:46.00px;height:15.40px;border:1px solid #6A6A6A;border-right-color:#D0D0D0;border-bottom-color:#D0D0D0"></div>
<div class="a" style="left:619px;top:247.8px;width:46.00px;height:15.40px;border:1px solid #6A6A6A;border-right-color:#D0D0D0;border-bottom-color:#D0D0D0"></div>
<div class="t" style="left:619px;width:46px;text-align:center;top:235.08px;font-size:7.8px;font-weight:bold">Status od</div>
<div class="t" style="left:621.5px;top:251.78px;font-size:7.8px">03.12.2004</div>
<div class="a" style="left:411px;top:272.3px;width:282.50px;height:156.50px;border:1px solid #A9B8CE;background:#ECE9D8"></div>
<div class="a" style="left:412px;top:274px;width:232.00px;height:9.70px;background:#EBEADB;border-bottom:1px solid #D6D2C2"></div>
<div class="a" style="left:460.5px;top:275px;width:1.00px;height:8.00px;background:#C7C5B2"></div>
<div class="a" style="left:502.5px;top:275px;width:1.00px;height:8.00px;background:#C7C5B2"></div>
<div class="a" style="left:643px;top:275px;width:1.00px;height:8.00px;background:#C7C5B2"></div>
<div class="t" style="left:413.7px;top:276.32px">Data wpłaty</div>
<div class="t" style="left:463.6px;top:276.32px">Kwota</div>
<div class="t" style="left:505.6px;top:276.32px">Tytułem</div>
<div class="a" style="left:412px;top:284px;width:232px;height:144.5px;overflow:hidden;background:#fff">
<div class="a" style="left:0px;top:10.75px;width:232.00px;height:0.75px;background:#A8A8A8"></div>
<div class="t" style="left:1px;top:2.88px;font-size:7.6px">16.02.2007</div>
<div class="t" style="left:50.5px;top:2.88px;font-size:7.6px">29.00</div>
<div class="t" style="left:92.5px;top:2.88px;font-size:7.6px">KS 1577 II 07</div>
<div class="a" style="left:224.5px;top:8.2px;width:1.00px;height:1.00px;background:#555"></div>
<div class="a" style="left:226.7px;top:8.2px;width:1.00px;height:1.00px;background:#555"></div>
<div class="a" style="left:228.9px;top:8.2px;width:1.00px;height:1.00px;background:#555"></div>
<div class="a" style="left:0px;top:22.0px;width:232.00px;height:0.75px;background:#A8A8A8"></div>
<div class="t" style="left:1px;top:14.13px;font-size:7.6px">15.01.2007</div>
<div class="t" style="left:50.5px;top:14.13px;font-size:7.6px">29.00</div>
<div class="t" style="left:92.5px;top:14.13px;font-size:7.6px">NR KS 1577 ZA 01 2007</div>
<div class="a" style="left:224.5px;top:19.45px;width:1.00px;height:1.00px;background:#555"></div>
<div class="a" style="left:226.7px;top:19.45px;width:1.00px;height:1.00px;background:#555"></div>
<div class="a" style="left:228.9px;top:19.45px;width:1.00px;height:1.00px;background:#555"></div>
<div class="a" style="left:0px;top:33.25px;width:232.00px;height:0.75px;background:#A8A8A8"></div>
<div class="t" style="left:1px;top:25.38px;font-size:7.6px">15.12.2006</div>
<div class="t" style="left:50.5px;top:25.38px;font-size:7.6px">29.00</div>
<div class="t" style="left:92.5px;top:25.38px;font-size:7.6px">ZA MC 12 2006 NR KS 1577</div>
<div class="a" style="left:224.5px;top:30.7px;width:1.00px;height:1.00px;background:#555"></div>
<div class="a" style="left:226.7px;top:30.7px;width:1.00px;height:1.00px;background:#555"></div>
<div class="a" style="left:228.9px;top:30.7px;width:1.00px;height:1.00px;background:#555"></div>
<div class="a" style="left:0px;top:44.5px;width:232.00px;height:0.75px;background:#A8A8A8"></div>
<div class="t" style="left:1px;top:36.63px;font-size:7.6px">16.11.2006</div>
<div class="t" style="left:50.5px;top:36.63px;font-size:7.6px">29.00</div>
<div class="t" style="left:92.5px;top:36.63px;font-size:7.6px">NR KS 1577 ZA 11 2006</div>
<div class="a" style="left:224.5px;top:41.95px;width:1.00px;height:1.00px;background:#555"></div>
<div class="a" style="left:226.7px;top:41.95px;width:1.00px;height:1.00px;background:#555"></div>
<div class="a" style="left:228.9px;top:41.95px;width:1.00px;height:1.00px;background:#555"></div>
<div class="a" style="left:0px;top:55.75px;width:232.00px;height:0.75px;background:#A8A8A8"></div>
<div class="t" style="left:1px;top:47.88px;font-size:7.6px">06.11.2006</div>
<div class="t" style="left:50.5px;top:47.88px;font-size:7.6px">29.00</div>
<div class="t" style="left:92.5px;top:47.88px;font-size:7.6px">NR KS 1577 P&nbsp; ZA 10-2006</div>
<div class="a" style="left:224.5px;top:53.2px;width:1.00px;height:1.00px;background:#555"></div>
<div class="a" style="left:226.7px;top:53.2px;width:1.00px;height:1.00px;background:#555"></div>
<div class="a" style="left:228.9px;top:53.2px;width:1.00px;height:1.00px;background:#555"></div>
<div class="a" style="left:0px;top:67.0px;width:232.00px;height:0.75px;background:#A8A8A8"></div>
<div class="t" style="left:1px;top:59.13px;font-size:7.6px">05.10.2006</div>
<div class="t" style="left:50.5px;top:59.13px;font-size:7.6px">29.00</div>
<div class="t" style="left:92.5px;top:59.13px;font-size:7.6px">NR KS 1577</div>
<div class="a" style="left:224.5px;top:64.45px;width:1.00px;height:1.00px;background:#555"></div>
<div class="a" style="left:226.7px;top:64.45px;width:1.00px;height:1.00px;background:#555"></div>
<div class="a" style="left:228.9px;top:64.45px;width:1.00px;height:1.00px;background:#555"></div>
<div class="a" style="left:0px;top:78.25px;width:232.00px;height:0.75px;background:#A8A8A8"></div>
<div class="t" style="left:1px;top:70.38px;font-size:7.6px">06.09.2006</div>
<div class="t" style="left:50.5px;top:70.38px;font-size:7.6px">29.00</div>
<div class="t" style="left:92.5px;top:70.38px;font-size:7.6px">ZA MC 08 2006 NR KS 1577</div>
<div class="a" style="left:224.5px;top:75.7px;width:1.00px;height:1.00px;background:#555"></div>
<div class="a" style="left:226.7px;top:75.7px;width:1.00px;height:1.00px;background:#555"></div>
<div class="a" style="left:228.9px;top:75.7px;width:1.00px;height:1.00px;background:#555"></div>
<div class="a" style="left:0px;top:89.5px;width:232.00px;height:0.75px;background:#A8A8A8"></div>
<div class="t" style="left:1px;top:81.63px;font-size:7.6px">08.08.2006</div>
<div class="t" style="left:50.5px;top:81.63px;font-size:7.6px">29.00</div>
<div class="t" style="left:92.5px;top:81.63px;font-size:7.6px">KS 1577</div>
<div class="a" style="left:224.5px;top:86.95px;width:1.00px;height:1.00px;background:#555"></div>
<div class="a" style="left:226.7px;top:86.95px;width:1.00px;height:1.00px;background:#555"></div>
<div class="a" style="left:228.9px;top:86.95px;width:1.00px;height:1.00px;background:#555"></div>
<div class="a" style="left:0px;top:100.75px;width:232.00px;height:0.75px;background:#A8A8A8"></div>
<div class="t" style="left:1px;top:92.88px;font-size:7.6px">20.07.2006</div>
<div class="t" style="left:50.5px;top:92.88px;font-size:7.6px">29.00</div>
<div class="t" style="left:92.5px;top:92.88px;font-size:7.6px">KS 1577 VI</div>
<div class="a" style="left:224.5px;top:98.2px;width:1.00px;height:1.00px;background:#555"></div>
<div class="a" style="left:226.7px;top:98.2px;width:1.00px;height:1.00px;background:#555"></div>
<div class="a" style="left:228.9px;top:98.2px;width:1.00px;height:1.00px;background:#555"></div>
<div class="a" style="left:0px;top:112.0px;width:232.00px;height:0.75px;background:#A8A8A8"></div>
<div class="t" style="left:1px;top:104.13px;font-size:7.6px">29.05.2006</div>
<div class="t" style="left:50.5px;top:104.13px;font-size:7.6px">29.00</div>
<div class="t" style="left:92.5px;top:104.13px;font-size:7.6px">NR KS 1577</div>
<div class="a" style="left:224.5px;top:109.45px;width:1.00px;height:1.00px;background:#555"></div>
<div class="a" style="left:226.7px;top:109.45px;width:1.00px;height:1.00px;background:#555"></div>
<div class="a" style="left:228.9px;top:109.45px;width:1.00px;height:1.00px;background:#555"></div>
<div class="a" style="left:0px;top:123.25px;width:232.00px;height:0.75px;background:#A8A8A8"></div>
<div class="t" style="left:1px;top:115.38px;font-size:7.6px">18.04.2006</div>
<div class="t" style="left:50.5px;top:115.38px;font-size:7.6px">29.00</div>
<div class="t" style="left:92.5px;top:115.38px;font-size:7.6px">KS 1577 IV.06</div>
<div class="a" style="left:224.5px;top:120.7px;width:1.00px;height:1.00px;background:#555"></div>
<div class="a" style="left:226.7px;top:120.7px;width:1.00px;height:1.00px;background:#555"></div>
<div class="a" style="left:228.9px;top:120.7px;width:1.00px;height:1.00px;background:#555"></div>
<div class="a" style="left:0px;top:134.5px;width:232.00px;height:0.75px;background:#A8A8A8"></div>
<div class="t" style="left:1px;top:126.63px;font-size:7.6px">06.03.2006</div>
<div class="t" style="left:50.5px;top:126.63px;font-size:7.6px">29.00</div>
<div class="t" style="left:92.5px;top:126.63px;font-size:7.6px">NR KS 1577 ZA 03.2006</div>
<div class="a" style="left:224.5px;top:131.95px;width:1.00px;height:1.00px;background:#555"></div>
<div class="a" style="left:226.7px;top:131.95px;width:1.00px;height:1.00px;background:#555"></div>
<div class="a" style="left:228.9px;top:131.95px;width:1.00px;height:1.00px;background:#555"></div>
<div class="a" style="left:0px;top:145.75px;width:232.00px;height:0.75px;background:#A8A8A8"></div>
<div class="t" style="left:1px;top:137.88px;font-size:7.6px">06.02.2006</div>
<div class="t" style="left:50.5px;top:137.88px;font-size:7.6px">29.00</div>
<div class="t" style="left:92.5px;top:137.88px;font-size:7.6px">NR KS 1577 ZA 02.2006</div>
<div class="a" style="left:224.5px;top:143.2px;width:1.00px;height:1.00px;background:#555"></div>
<div class="a" style="left:226.7px;top:143.2px;width:1.00px;height:1.00px;background:#555"></div>
<div class="a" style="left:228.9px;top:143.2px;width:1.00px;height:1.00px;background:#555"></div>
<div class="a" style="left:49.30000000000001px;top:0px;width:0.75px;height:144.50px;background:#A8A8A8"></div>
<div class="a" style="left:91.30000000000001px;top:0px;width:0.75px;height:144.50px;background:#A8A8A8"></div>
<div class="a" style="left:231.25px;top:0px;width:0.75px;height:144.50px;background:#A8A8A8"></div>
</div>
<div class="a" style="left:681.6px;top:285px;width:10.40px;height:142.00px;background:linear-gradient(90deg,#F3F1EC,#FEFEFB)"></div>
<div class="a" style="left:681.6px;top:285px;width:10.40px;height:11.40px;border-radius:1px;background:linear-gradient(135deg,#E2EBFE,#B8CDF8);border:0.5px solid #B6C9F0"></div>
<svg class="a" style="left:683.3px;top:288.2px" width="7" height="5"><path d="M1 4 L3.5 1.5 L6 4" stroke="#3D5175" stroke-width="1.6" fill="none"/></svg>
<div class="a" style="left:681.6px;top:415.6px;width:10.40px;height:11.40px;border-radius:1px;background:linear-gradient(135deg,#E2EBFE,#B8CDF8);border:0.5px solid #B6C9F0"></div>
<svg class="a" style="left:683.3px;top:418.8px" width="7" height="5"><path d="M1 1 L3.5 3.5 L6 1" stroke="#3D5175" stroke-width="1.6" fill="none"/></svg>
<div class="a" style="left:682.1px;top:296.2px;width:9.40px;height:59.60px;border-radius:1px;background:linear-gradient(90deg,#C9DAFC,#B7CDF9 50%,#A9C2F5);border:0.5px solid #9BB3E8"></div>
<div class="a" style="left:684.6px;top:323.5px;width:4.40px;height:1.00px;background:#EEF3FE"></div>
<div class="a" style="left:684.6px;top:325.5px;width:4.40px;height:1.00px;background:#EEF3FE"></div>
<div class="a" style="left:684.6px;top:327.5px;width:4.40px;height:1.00px;background:#EEF3FE"></div>
<div class="btn" style="left:485.5px;top:433px;width:78.10px;height:15.00px"></div>
<div class="t" style="left:485.5px;width:78.10000000000002px;text-align:center;top:437.33px;font-size:8.1px">Wyświetl wpłaty</div>
<div class="btn" style="left:573px;top:433.6px;width:47.30px;height:14.10px"></div>
<div class="t" style="left:573px;width:47.299999999999955px;text-align:center;top:437.48px;font-size:8.1px">Zamknij</div>
<div class="a" style="left:495.8px;top:444.8px;width:3.70px;height:0.80px;background:#222"></div>
<div class="a" style="left:583.3px;top:444.8px;width:4.00px;height:0.80px;background:#222"></div>
<div class="a" style="left:0px;top:475.5px;width:112.00px;height:27.00px;border-radius:6px 6px 0 0;background:linear-gradient(#A9BDF1 0,#8AA6E8 1.5px,#7B96DF 4px,#7A94DD 60%,#7FA0E8 90%,#7A94DD 100%)"></div>
<svg class="a" style="left:2.75px;top:483.75px" width="11.5" height="11.5" viewBox="0 0 12 12"><rect width="12" height="12" fill="#F4F2F6"/><path d="M3 0.5 L4.5 2.5 L6 0.8 L7.5 2.5 L9 0.5 L9 3 L3 3Z" fill="#E8303A"/><ellipse cx="6" cy="6.2" rx="4.6" ry="2.6" fill="none" stroke="#3A3AA8" stroke-width="1.3"/><ellipse cx="6" cy="6" rx="2" ry="1.3" fill="#9A6AB0"/><path d="M2.5 9.5 Q6 11.5 9.5 9.5" stroke="#5050B8" stroke-width="1.2" fill="none"/></svg>
<div class="t" style="left:15.6px;top:485.89px;font-size:9px;color:#DCE4F8;font-weight:bold;transform:scaleY(1.22)">Wyszukiwa...</div>
<div class="xbtn" style="left:78px;top:480px;width:14.50px;height:14.40px"></div>
<div class="a" style="left:83.5px;top:483px;width:6.00px;height:5.40px;border:1px solid #fff;border-top-width:1.5px"></div>
<div class="a" style="left:81.5px;top:485.5px;width:5.50px;height:5.90px;border:1px solid #fff;border-top-width:1.5px;background:#2A6AEA"></div>
<div class="xcl" style="left:95px;top:480px;width:13.50px;height:14.40px"></div>
<svg class="a" style="left:95px;top:480px" width="13.5" height="14.399999999999977"><path d="M3.7800000000000002 4.031999999999994 L9.719999999999999 10.367999999999983 M9.719999999999999 4.031999999999994 L3.7800000000000002 10.367999999999983" stroke="#fff" stroke-width="1.6"/></svg>
<svg class="a" style="left:940.3px;top:41.6px" width="17" height="17" viewBox="0 0 17 17"><rect width="17" height="17" fill="#12E46A"/><path d="M3 1.5 H11 L13 4 V15.5 H3Z" fill="#fff" stroke="#8A8A8A" stroke-width="0.8"/><path d="M4 12 L9 14 H12 V15 H4Z" fill="#D0D0D8"/><circle cx="9" cy="6" r="3.6" fill="#2A7FE0" stroke="#101060" stroke-width="1"/><path d="M11.5 8.5 L15.5 12.5" stroke="#000" stroke-width="2"/></svg>
<svg class="a" style="left:940.3px;top:63.3px" width="17" height="17" viewBox="0 0 17 17"><rect width="17" height="17" fill="#00F000"/><circle cx="7.5" cy="8" r="2.8" fill="#E00000"/><path d="M1.5 17 V13.5 Q2 11 5 10.5 H10 Q13 11 13.5 13.5 V17Z" fill="#E00000"/><path d="M11 4.5 H16.5 M13.75 1.5 V7.5" stroke="#000" stroke-width="1.4"/></svg>
<svg class="a" style="left:940.3px;top:85.4px" width="17" height="17" viewBox="0 0 17 17"><rect width="17" height="17" fill="#00F000"/><circle cx="8.5" cy="4.8" r="3" fill="#E00000"/><path d="M1.5 17 V12 Q2 9 5.5 8.5 H11.5 Q15 9 15.5 12 V17Z" fill="#E00000"/></svg>
<svg class="a" style="left:940.3px;top:107.4px" width="17" height="17" viewBox="0 0 17 17"><rect width="17" height="17" fill="#8EEFFB"/><circle cx="8.5" cy="8.5" r="4.6" fill="#F2E050" stroke="#403820" stroke-width="0.9"/><path d="M6.3 6.5 V10.5 M8.2 6.5 V10.5 M10.6 6.5 V10.5 M8.2 8.5 H10.6" stroke="#202020" stroke-width="0.9"/></svg>
<svg class="a" style="left:940.3px;top:133.6px" width="17" height="17" viewBox="0 0 17 17"><rect width="17" height="17" fill="#00F000"/><path d="M2 4.5 H7 M2 4.5 L4 2.8 M2 4.5 L4 6.2 M10 4.5 H15 M15 4.5 L13 2.8 M15 4.5 L13 6.2" stroke="#000" stroke-width="1.1" fill="none"/><rect x="1" y="8" width="15" height="2.6" fill="#1ABCE8"/><path d="M1 7.6 H16 M1 11 H16" stroke="#205060" stroke-width="0.6"/><path d="M8.5 12 V13" stroke="#205060" stroke-width="0.6"/></svg>
<svg class="a" style="left:940.3px;top:156px" width="17" height="17" viewBox="0 0 17 17"><rect width="17" height="17" fill="#F8F000"/><rect x="2" y="1" width="13" height="5" fill="#30B030" stroke="#103010" stroke-width="0.9"/><path d="M3.5 4.5 L5 2.5 L6.5 4.5 L8 2.5 L9.5 4.5 L11 2.5 L12.5 4.5" stroke="#103010" stroke-width="0.6" fill="none"/><path d="M5 8 L8 10 L7 11 L10.5 13.5 L9.5 14.5 L13 16" stroke="#000" stroke-width="1.5" fill="none"/></svg>
<div class="a" style="left:937px;top:33px;width:1.00px;height:470.00px;background:#F8F7F0"></div>
</body></html>
